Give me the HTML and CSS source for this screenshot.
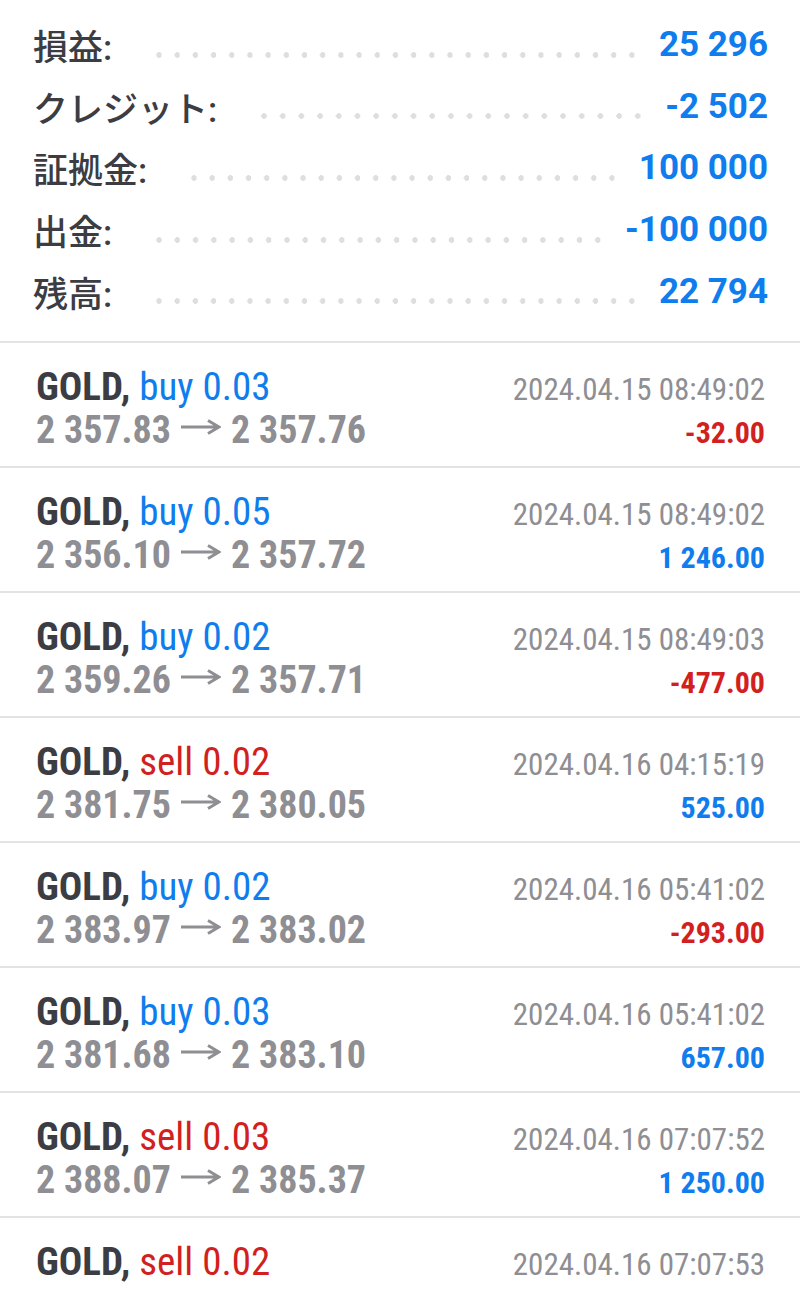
FILE: index.html
```html
<!DOCTYPE html>
<html lang="ja">
<head>
  <meta charset="UTF-8">
  <meta name="viewport" content="width=device-width, initial-scale=1.0">
  <title>履歴</title>
  <link rel="stylesheet" href="styles.css">
</head>
<body>
  <div class="summary">
    <div class="sum-row">
      <span class="sum-label">損益:</span>
      <span class="dots"></span>
      <span class="sum-value">25 296</span>
    </div>
    <div class="sum-row">
      <span class="sum-label">クレジット:</span>
      <span class="dots"></span>
      <span class="sum-value">-2 502</span>
    </div>
    <div class="sum-row">
      <span class="sum-label">証拠金:</span>
      <span class="dots"></span>
      <span class="sum-value">100 000</span>
    </div>
    <div class="sum-row">
      <span class="sum-label">出金:</span>
      <span class="dots"></span>
      <span class="sum-value">-100 000</span>
    </div>
    <div class="sum-row">
      <span class="sum-label">残高:</span>
      <span class="dots"></span>
      <span class="sum-value">22 794</span>
    </div>
  </div>

  <ul class="deals">
    <li class="deal">
      <div class="deal-line">
        <span class="symbol">GOLD, <span class="buy">buy 0.03</span></span>
        <span class="time">2024.04.15 08:49:02</span>
      </div>
      <div class="deal-line">
        <span class="prices">2 357.83<svg class="arrow" viewBox="0 0 40 16"><path d="M0 8H38M27 1.5L38 8L27 14.5"/></svg>2 357.76</span>
        <span class="profit loss">-32.00</span>
      </div>
    </li>
    <li class="deal">
      <div class="deal-line">
        <span class="symbol">GOLD, <span class="buy">buy 0.05</span></span>
        <span class="time">2024.04.15 08:49:02</span>
      </div>
      <div class="deal-line">
        <span class="prices">2 356.10<svg class="arrow" viewBox="0 0 40 16"><path d="M0 8H38M27 1.5L38 8L27 14.5"/></svg>2 357.72</span>
        <span class="profit">1 246.00</span>
      </div>
    </li>
    <li class="deal">
      <div class="deal-line">
        <span class="symbol">GOLD, <span class="buy">buy 0.02</span></span>
        <span class="time">2024.04.15 08:49:03</span>
      </div>
      <div class="deal-line">
        <span class="prices">2 359.26<svg class="arrow" viewBox="0 0 40 16"><path d="M0 8H38M27 1.5L38 8L27 14.5"/></svg>2 357.71</span>
        <span class="profit loss">-477.00</span>
      </div>
    </li>
    <li class="deal">
      <div class="deal-line">
        <span class="symbol">GOLD, <span class="sell">sell 0.02</span></span>
        <span class="time">2024.04.16 04:15:19</span>
      </div>
      <div class="deal-line">
        <span class="prices">2 381.75<svg class="arrow" viewBox="0 0 40 16"><path d="M0 8H38M27 1.5L38 8L27 14.5"/></svg>2 380.05</span>
        <span class="profit">525.00</span>
      </div>
    </li>
    <li class="deal">
      <div class="deal-line">
        <span class="symbol">GOLD, <span class="buy">buy 0.02</span></span>
        <span class="time">2024.04.16 05:41:02</span>
      </div>
      <div class="deal-line">
        <span class="prices">2 383.97<svg class="arrow" viewBox="0 0 40 16"><path d="M0 8H38M27 1.5L38 8L27 14.5"/></svg>2 383.02</span>
        <span class="profit loss">-293.00</span>
      </div>
    </li>
    <li class="deal">
      <div class="deal-line">
        <span class="symbol">GOLD, <span class="buy">buy 0.03</span></span>
        <span class="time">2024.04.16 05:41:02</span>
      </div>
      <div class="deal-line">
        <span class="prices">2 381.68<svg class="arrow" viewBox="0 0 40 16"><path d="M0 8H38M27 1.5L38 8L27 14.5"/></svg>2 383.10</span>
        <span class="profit">657.00</span>
      </div>
    </li>
    <li class="deal">
      <div class="deal-line">
        <span class="symbol">GOLD, <span class="sell">sell 0.03</span></span>
        <span class="time">2024.04.16 07:07:52</span>
      </div>
      <div class="deal-line">
        <span class="prices">2 388.07<svg class="arrow" viewBox="0 0 40 16"><path d="M0 8H38M27 1.5L38 8L27 14.5"/></svg>2 385.37</span>
        <span class="profit">1 250.00</span>
      </div>
    </li>
    <li class="deal">
      <div class="deal-line">
        <span class="symbol">GOLD, <span class="sell">sell 0.02</span></span>
        <span class="time">2024.04.16 07:07:53</span>
      </div>
      <div class="deal-line">
        <span class="prices">2 388.04<svg class="arrow" viewBox="0 0 40 16"><path d="M0 8H38M27 1.5L38 8L27 14.5"/></svg>2 385.34</span>
        <span class="profit">700.00</span>
      </div>
    </li>
  </ul>
</body>
</html>
```

FILE: styles.css
```css
/* general */
* {
  margin: 0;
  padding: 0;
  box-sizing: border-box;
}

body {
  background-color: #fff;
  color: #3c3c43;
  font-family: Roboto, "Noto Sans CJK JP", sans-serif;
  height: 1289px;
  overflow: hidden;
}

/* account summary */
.summary {
  padding: 14px 32px 19px 33px;
}

.sum-row {
  display: flex;
  align-items: center;
  height: 61.6px;
}

.sum-label {
  font-size: 35px;
  font-weight: 500;
  color: #3c3c43;
}

.dots {
  flex: 1;
  height: 6px;
  margin: 20px 18px 0 38px;
  background-image: radial-gradient(circle, #dedede 2.6px, transparent 3px);
  background-size: 18px 6px;
  background-repeat: space no-repeat;
}

.sum-value {
  font-size: 35px;
  font-weight: bold;
  color: #0f7ded;
}

/* deal list */
.deals {
  list-style: none;
  font-family: "Roboto Condensed", "Liberation Sans Narrow", Roboto, sans-serif;
}

.deal {
  height: 125px;
  padding: 23px 35px 0 36px;
  border-top: 2px solid #e3e3e3;
}

.deal-line {
  display: flex;
  justify-content: space-between;
  align-items: baseline;
}

.deal-line:first-child {
  height: 42px;
}

.deal-line + .deal-line {
  height: 44px;
}

.symbol {
  font-size: 39px;
  line-height: 42px;
  font-weight: bold;
  color: #3c3c43;
}

.symbol .buy,
.symbol .sell {
  font-weight: normal;
}

.buy {
  color: #0f7ded;
}

.sell {
  color: #d21f1f;
}

.time {
  font-size: 31px;
  color: #8e8e93;
}

.prices {
  font-size: 38px;
  line-height: 44px;
  font-weight: bold;
  color: #8e8e93;
}

.arrow {
  width: 40px;
  height: 16px;
  margin: 0 10px;
  vertical-align: 8px;
  fill: none;
  stroke: #8e8e93;
  stroke-width: 3;
}

.profit {
  font-size: 30px;
  font-weight: bold;
  color: #0f7ded;
}

.profit.loss {
  color: #d21f1f;
}
```
